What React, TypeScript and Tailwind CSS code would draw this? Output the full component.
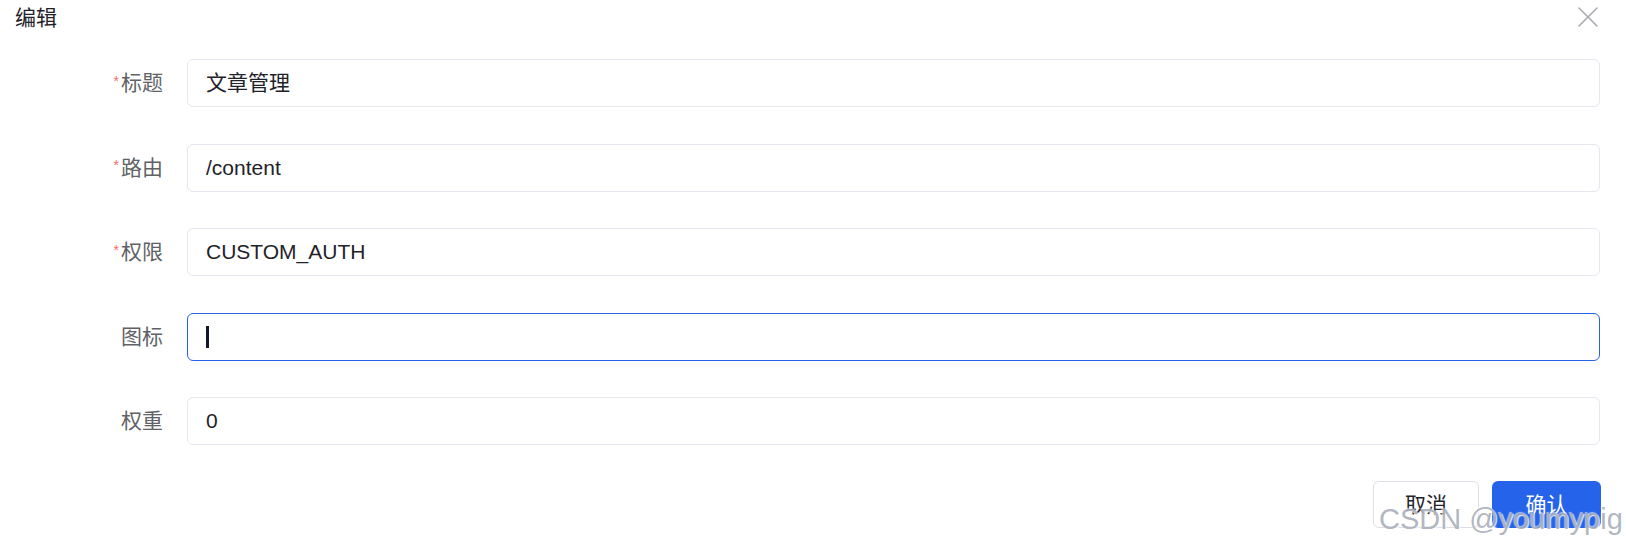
import { FC } from "react";

type Field = {
  label: string;
  value: string;
  required?: boolean;
  focused?: boolean;
};

const fields: Field[] = [
  { label: "标题", value: "文章管理", required: true },
  { label: "路由", value: "/content", required: true },
  { label: "权限", value: "CUSTOM_AUTH", required: true },
  { label: "图标", value: "", focused: true },
  { label: "权重", value: "0" },
];

const CloseIcon: FC = () => (
  <svg width="20" height="20" viewBox="0 0 20 20" fill="none">
    <path d="M1 1L19 19M19 1L1 19" stroke="#a8abb2" strokeWidth="1.6" strokeLinecap="round" />
  </svg>
);

const FormRow: FC<{ field: Field }> = ({ field }) => (
  <div className="flex flex-row items-center h-[48px]">
    <div className="w-[187px] shrink-0 pr-[24px] flex flex-row justify-end items-center text-[21px] text-[#606266]">
      {field.required ? <span className="text-[#f56c6c] text-[14px] mr-[2px] -mt-[4px]">*</span> : null}
      <span>{field.label}</span>
    </div>
    <div
      className={
        field.focused
          ? "flex-1 h-[48px] rounded-[6px] border border-[#2563eb] bg-white flex items-center pl-[18px]"
          : "flex-1 h-[48px] rounded-[6px] border border-[#e4e7ed] bg-white flex items-center pl-[18px]"
      }
    >
      {field.focused ? (
        <span className="block w-[3px] h-[22px] bg-[#111827]" />
      ) : (
        <span className="text-[21px] text-[#1f2329]">{field.value}</span>
      )}
    </div>
  </div>
);

const App: FC = () => {
  return (
    <div
      className="relative w-full h-[548px] bg-white overflow-hidden"
      style={{ fontFamily: '"Liberation Sans", "Noto Sans CJK SC", sans-serif' }}
    >
      <div className="flex flex-row justify-between items-start pl-[15px] pr-[28px] pt-[4px] h-[59px]">
        <span className="text-[21px] leading-[28px] text-[#1f2329]">编辑</span>
        <div className="mt-[3px]">
          <CloseIcon />
        </div>
      </div>

      <div className="flex flex-col gap-[36.5px] pr-[26px]">
        {fields.map((f) => (
          <FormRow key={f.label} field={f} />
        ))}
      </div>

      <div className="flex flex-row justify-end gap-[13px] pr-[25px] mt-[36px]">
        <button className="w-[106px] h-[47px] rounded-[6px] border border-[#dcdfe6] bg-white text-[21px] text-[#1f2329]">
          取消
        </button>
        <button className="w-[109px] h-[47px] rounded-[6px] bg-[#2563eb] text-[21px] text-white">确认</button>
      </div>

      <div
        className="absolute left-[1379px] top-[502px] text-[29px] leading-[34px] text-[#9ca3af]/80 whitespace-nowrap pointer-events-none"
        style={{ textShadow: "1px 1px 1px rgba(255,255,255,0.9), -1px -1px 1px rgba(255,255,255,0.6)" }}
      >
        CSDN @youmypig
      </div>
    </div>
  );
};

export default App;
